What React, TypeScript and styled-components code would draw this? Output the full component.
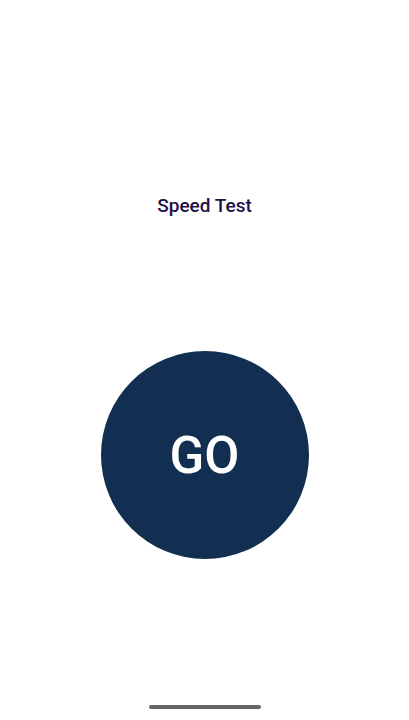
import React from "react";
import styled, { createGlobalStyle } from "styled-components";

const Global = createGlobalStyle`
  html, body { margin: 0; padding: 0; background: #ffffff; }
  body { font-family: Roboto, "Noto Sans", sans-serif; }
`;

const Page = styled.div`
  width: 409px;
  height: 720px;
  display: flex;
  flex-direction: column;
  align-items: center;
  background: #ffffff;
  box-sizing: border-box;
  padding-top: 194px;
`;

const Title = styled.h1`
  margin: 0;
  font-family: Roboto, sans-serif;
  font-weight: 500;
  font-size: 19px;
  line-height: 24px;
  color: #22104a;
  letter-spacing: 0;
`;

const GoButton = styled.button`
  margin-top: 133px;
  width: 208px;
  height: 208px;
  border-radius: 50%;
  border: none;
  background: #122e50;
  color: #ffffff;
  font-family: Roboto, sans-serif;
  font-weight: 500;
  font-size: 51px;
  display: flex;
  align-items: center;
  justify-content: center;
  padding: 0;
  cursor: pointer;
`;

const HomeIndicator = styled.div`
  margin-top: 146px;
  width: 112px;
  height: 4px;
  border-radius: 2px;
  background: #666666;
`;

export default function App() {
  return (
    <>
      <Global />
      <Page>
        <Title>Speed Test</Title>
        <GoButton>GO</GoButton>
        <HomeIndicator />
      </Page>
    </>
  );
}
